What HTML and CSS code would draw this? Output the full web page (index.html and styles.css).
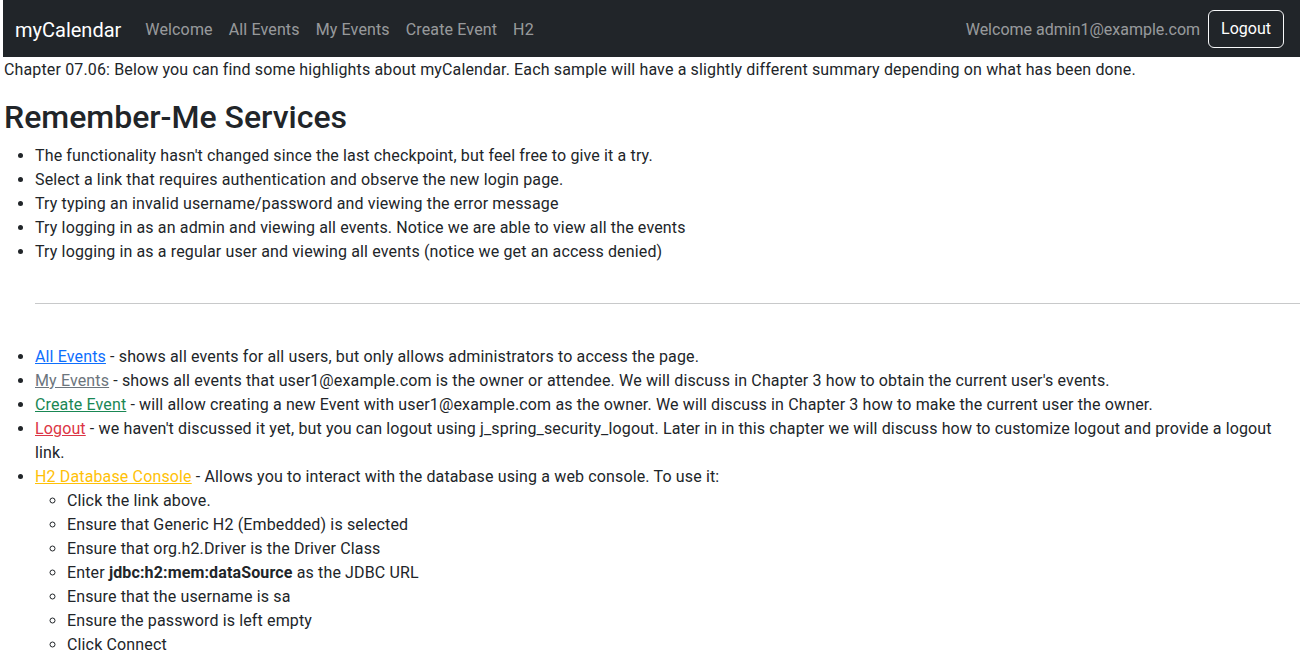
FILE: index.html
```html
<!DOCTYPE html>
<html lang="en">
<head>
<meta charset="utf-8">
<title>myCalendar</title>
<link rel="stylesheet" href="styles.css">
</head>
<body>
<div class="page">
  <nav class="navbar">
    <a class="brand" href="#">myCalendar</a>
    <ul class="nav">
      <li><a href="#">Welcome</a></li>
      <li><a href="#">All Events</a></li>
      <li><a href="#">My Events</a></li>
      <li><a href="#">Create Event</a></li>
      <li><a href="#">H2</a></li>
    </ul>
    <div class="nav-right">
      <span class="welcome">Welcome admin1@example.com</span>
      <button class="btn-logout" type="button">Logout</button>
    </div>
  </nav>
  <p class="intro">Chapter 07.06: Below you can find some highlights about myCalendar. Each sample will have a slightly different summary depending on what has been done.</p>
  <h1 class="title">Remember-Me Services</h1>
  <ul class="list">
    <li>The functionality hasn't changed since the last checkpoint, but feel free to give it a try.</li>
    <li>Select a link that requires authentication and observe the new login page.</li>
    <li>Try typing an invalid username/password and viewing the error message</li>
    <li>Try logging in as an admin and viewing all events. Notice we are able to view all the events</li>
    <li>Try logging in as a regular user and viewing all events (notice we get an access denied)</li>
  </ul>
  <div class="divider"><hr></div>
  <ul class="list links">
    <li><a class="l-blue" href="#">All Events</a> - shows all events for all users, but only allows administrators to access the page.</li>
    <li><a class="l-gray" href="#">My Events</a> - shows all events that user1@example.com is the owner or attendee. We will discuss in Chapter 3 how to obtain the current user's events.</li>
    <li><a class="l-green" href="#">Create Event</a> - will allow creating a new Event with user1@example.com as the owner. We will discuss in Chapter 3 how to make the current user the owner.</li>
    <li><a class="l-red" href="#">Logout</a> - we haven't discussed it yet, but you can logout using j_spring_security_logout. Later in in this chapter we will discuss how to customize logout and provide a logout link.</li>
    <li><a class="l-yellow" href="#">H2 Database Console</a> - Allows you to interact with the database using a web console. To use it:
      <ul class="sub">
        <li>Click the link above.</li>
        <li>Ensure that Generic H2 (Embedded) is selected</li>
        <li>Ensure that org.h2.Driver is the Driver Class</li>
        <li>Enter <strong>jdbc:h2:mem:dataSource</strong> as the JDBC URL</li>
        <li>Ensure that the username is sa</li>
        <li>Ensure the password is left empty</li>
        <li>Click Connect</li>
      </ul>
    </li>
  </ul>
</div>
</body>
</html>
```
FILE: styles.css
```css
* { box-sizing: border-box; }
html, body { margin: 0; padding: 0; }
body {
  font-family: Roboto, "Liberation Sans", Arial, sans-serif;
  font-size: 16px;
  line-height: 24px;
  letter-spacing: 0.14px;
  color: #212529;
  background: #fff;
}
.page { padding: 0 5px 0 3px; }
.navbar {
  display: flex;
  align-items: center;
  background: #212529;
  height: 57px;
  padding: 2px 16px 0 12px;
}
.brand {
  color: #fff;
  font-size: 20px;
  line-height: 30px;
  letter-spacing: 0;
  text-decoration: none;
  margin-right: 16px;
}
.nav {
  display: flex;
  list-style: none;
  margin: 0;
  padding: 0;
}
.nav a {
  display: block;
  padding: 8px;
  color: rgba(255,255,255,.55);
  text-decoration: none;
}
.nav-right {
  margin-left: auto;
  display: flex;
  align-items: center;
  gap: 8px;
}
.welcome { color: rgba(255,255,255,.55); letter-spacing: 0; }
.btn-logout {
  font: inherit;
  letter-spacing: 0;
  color: #fff;
  background: transparent;
  border: 1px solid #f8f9fa;
  border-radius: 6px;
  height: 38px;
  padding: 0 12px;
  margin-bottom: 2px;
}
.intro { margin: 1px 0 16px 1px; }
.title {
  margin: 0 0 8px 1px;
  font-size: 32px;
  line-height: 38px;
  font-weight: 500;
  letter-spacing: 0;
}
.list { margin: 0 0 16px; padding-left: 32px; }
.divider { padding: 23px 0 0 32px; }
.divider hr {
  margin: 0;
  border: 0;
  border-top: 1px solid #c8c9ca;
}
.links { margin-top: 41px; }
.sub { list-style: circle; margin: 0; padding-left: 32px; }
.l-blue { color: #0d6efd; }
.l-gray { color: #6c757d; }
.l-green { color: #198754; }
.l-red { color: #dc3545; }
.l-yellow { color: #ffc107; }
strong { font-weight: 700; }
```
